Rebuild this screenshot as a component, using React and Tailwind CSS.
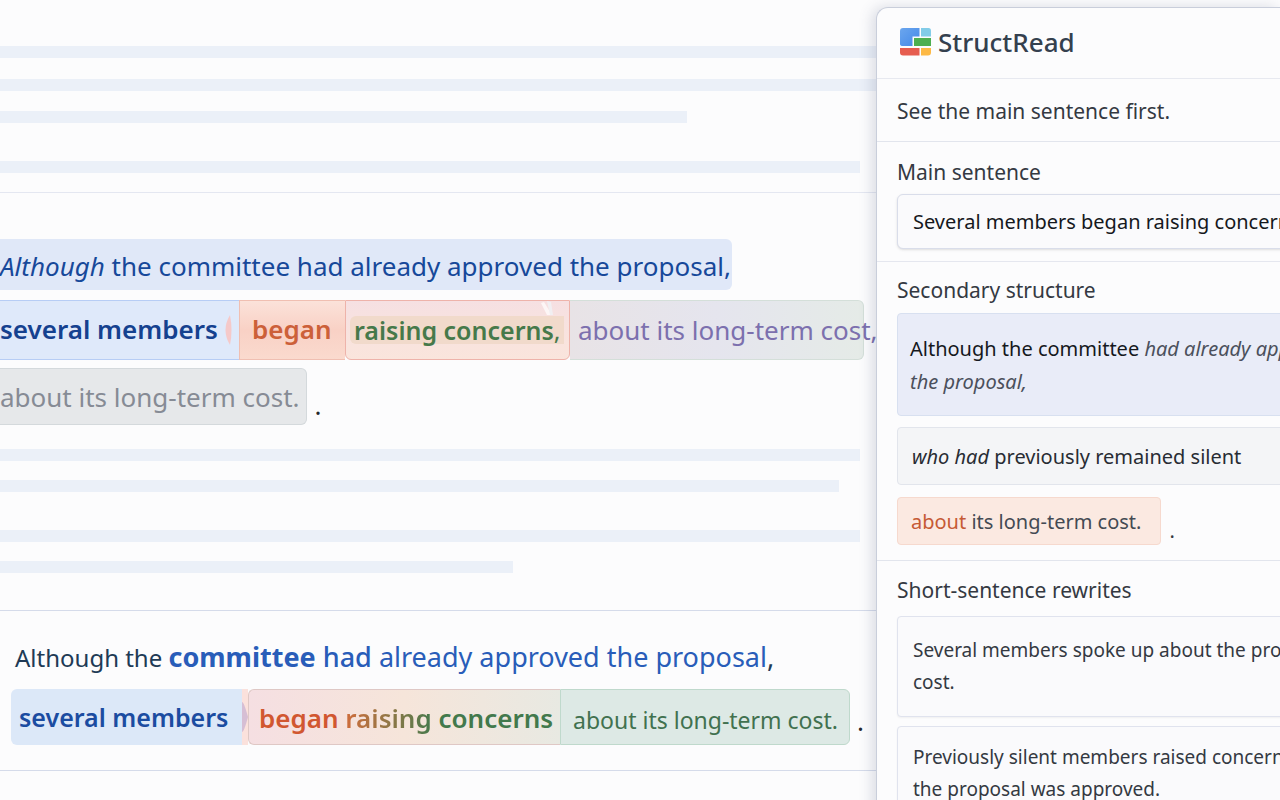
import React from "react";

function TextBar({ className }) {
  return <div className={"h-3 bg-[#ebf0f8] " + className} />;
}

function Logo() {
  return (
    <svg width="32" height="28" viewBox="0 0 32 28" aria-hidden="true">
      <defs>
        <linearGradient id="logo-blue" x1="0" y1="0" x2="1" y2="1">
          <stop offset="0" stopColor="#6ba6ee" />
          <stop offset="1" stopColor="#4489e8" />
        </linearGradient>
      </defs>
      <path d="M3 0H19.5V8.5H12.5V18H3Q0 18 0 16V3Q0 0 3 0Z" fill="url(#logo-blue)" />
      <path d="M21 0H28.500Q31 0 31 3V8.500H21Z" fill="#82cce8" />
      <path d="M14 10H31V18H14Z" fill="#4daf50" />
      <path d="M0 20H19.500V27.500H3Q0 27.500 0 24.500Z" fill="#e65d50" />
      <path d="M21 20H31V24.500Q31 27.500 28 27.500H21Z" fill="#fdb945" />
    </svg>
  );
}

function Document() {
  return (
    <main className="min-w-0 flex-1 overflow-hidden whitespace-nowrap">
      <section className="flex h-[193px] flex-col border-b border-[#e4e7f1] pt-[46px]">
        <TextBar className="w-full" />
        <TextBar className="mt-[21px] w-full" />
        <TextBar className="mt-5 mr-[189px]" />
        <TextBar className="mt-[38px] mr-4" />
      </section>

      <section className="flex flex-col items-start pt-[46px] pb-[37px] text-[26px]">
        <p className="h-[51px] rounded-r-md bg-[#e0e8f8] pr-px leading-[54px] text-[#17489a]">
          <em>Although</em> the committee had already approved the proposal,
        </p>
        <p className="mt-[10px] flex h-[60px] items-stretch leading-[56px]">
          <strong className="relative w-[239px] border-y border-[#b7cdf5] bg-[#dfe9fa] font-semibold text-[#15418f]">
            several members
            <svg className="absolute top-[14px] right-[6px]" width="8" height="30" viewBox="0 0 8 30" aria-hidden="true">
              <path d="M5 0Q8 15 5 30Q-4 15 5 0Z" fill="#f5c9c9" />
            </svg>
          </strong>
          <strong className="w-[106px] border border-r-0 border-[#f0bfb2] bg-linear-to-b from-[#fbe2da] via-[#f9d1c5] to-[#fadace] pl-3 font-semibold text-[#cc6039]">
            began
          </strong>
          <strong className="relative flex w-[225px] items-center rounded-b-md border border-[#eeb3aa] bg-linear-to-b from-[#f6e0e2] to-[#fae5dc] pl-1 text-[25px] font-semibold text-[#46794a]">
            <span className="rounded-l-md bg-[#f1dacb] px-1 leading-7">
              raising concerns<span className="font-normal">,</span>
            </span>
            <svg className="absolute top-0 right-[16px]" width="12" height="14" viewBox="0 0 12 14" aria-hidden="true">
              <path d="M0 2L3 1L11 14H6Z" fill="#fdf6f6" />
              <path d="M6 0L10 1L12 14H9Z" fill="#f1eff2" />
            </svg>
          </strong>
          <span className="w-[294px] rounded-r-md border border-l-0 border-[#d4dfd9] bg-linear-to-r from-[#e8e3e6] via-[#e5e5ee] to-[#e5ebe7] pl-2 leading-[58px] text-[#7c70ae]">
            about its long-term cost,
          </span>
        </p>
        <p className="mt-2 flex items-end gap-2">
          <span className="h-[57px] rounded-r-md border border-l-0 border-[#d4d9dc] bg-[#e6e8ea] pr-[6px] leading-[56px] text-[#868b95]">
            about its long-term cost.
          </span>
          <span className="text-[#25282d]">.</span>
        </p>
        <div className="mt-6 flex w-full flex-col">
          <TextBar className="mr-4" />
          <TextBar className="mt-[19px] mr-[37px]" />
          <TextBar className="mt-[38px] mr-4" />
          <TextBar className="mt-[19px] mr-[363px]" />
        </div>
      </section>

      <section className="flex flex-col items-start border-y border-[#d5dbea] px-[11px] pt-[23px] pb-[25px] text-[26px]">
        <p className="h-[55px] pl-1 text-[27px] leading-[45px] text-[#295db9]">
          <span className="text-2xl text-[#203a55]">Although the </span>
          <strong className="font-bold">committee</strong> <span className="font-medium">had</span> already approved the proposal<span className="text-[#203a55]">,</span>
        </p>
        <p className="flex h-14 items-stretch leading-[56px]">
          <strong className="w-[231px] rounded-l-md bg-[#dce8f8] pl-2 text-[25px] font-semibold text-[#1b4ca1]">
            several members
          </strong>
          <span className="flex w-[6px] items-center bg-[#fbe1dc]">
            <svg width="6" height="30" viewBox="0 0 6 30" aria-hidden="true">
              <path d="M0 0Q2 0 6 15Q2 30 0 30Z" fill="#d6bed4" />
            </svg>
          </span>
          <strong className="w-[312px] rounded-l-md border border-r-0 border-[#dfc8c5] bg-linear-to-r from-[#f5dfe2] via-[#f6e5da] to-[#e8e9e2] pl-[10px] font-semibold text-[#42794c]">
            <span className="text-[#d15730]">began</span>{" "}
            <span className="bg-linear-to-r from-[#cf6c3c] to-[#42794c] bg-clip-text text-transparent">raising</span> concerns
          </strong>
          <span className="w-[290px] rounded-r-md border border-[#bfd9cc] bg-[#dde9e5] pl-3 text-[23px] leading-[60px] text-[#41714f]">
            about its long-term cost.
          </span>
          <span className="pt-1 pl-[7px] text-[#25282d]">.</span>
        </p>
      </section>
    </main>
  );
}

function StructPanel() {
  return (
    <aside className="z-10 mt-[7px] h-[900px] w-[404px] shrink-0 rounded-tl-xl border-t border-l border-[#c9cedb] bg-[#fcfcfd] text-xl whitespace-nowrap text-[#343942] shadow-[-4px_0_14px_rgba(60,70,110,0.18)]">
      <header className="flex h-[71px] items-center gap-[6px] border-b border-[#e7e9f0] pb-[2px] pl-[23px]">
        <Logo />
        <h1 className="text-[26px] font-medium text-[#34404e]">StructRead</h1>
      </header>
      <p className="h-[63px] border-b border-[#e2e5ed] pl-5 text-[21px] leading-[64px]">See the main sentence first.</p>

      <section className="h-[120px] border-b border-[#e5e7ef] pt-[13px] pl-5">
        <h2 className="text-[21px] leading-[34px]">Main sentence</h2>
        <div className="mt-[5px] w-[480px] rounded-md border border-[#d9ddea] bg-[#fafafc] pl-[15px] leading-[53px] text-[#15181d] shadow-sm">
          Several members began raising concerns.
        </div>
      </section>

      <section className="h-[299px] border-b border-[#e2e5ed] pt-[11px] pl-5">
        <h2 className="text-[21px] leading-[34px]">Secondary structure</h2>
        <div className="mt-[6px] h-[103px] w-[480px] rounded border border-[#d8e0f0] bg-[#e9ecf8] pt-[18px] pl-3 leading-[33px] text-[#4b505c]">
          <span className="text-[#15181d]">Although the committee</span> <em>had already approved</em>
          <br />
          <em>the proposal,</em>
        </div>
        <div className="mt-[11px] h-[58px] w-[480px] rounded border border-[#e2e5ec] bg-[#f4f5f7] pl-[14px] leading-[58px] text-[#282c33]">
          <em>who had</em> previously remained silent
        </div>
        <div className="mt-3 flex items-end gap-2">
          <span className="h-12 rounded border border-[#f6d9ce] bg-[#fbe9e1] pr-[19px] pl-[13px] leading-[48px] text-[#444a53]">
            <span className="text-[#c65a35]">about</span> its long-term cost.
          </span>
          <span>.</span>
        </div>
      </section>

      <section className="flex flex-col pt-3 pl-5 text-[19px]">
        <h2 className="text-[21px] leading-[34px]">Short-sentence rewrites</h2>
        <p className="mt-[9px] h-[101px] w-[480px] rounded border border-[#e0e3ee] bg-[#fafafc] pt-[17px] pl-[15px] leading-8 shadow-xs">
          Several members spoke up about the proposal’s
          <br />
          cost.
        </p>
        <p className="mt-[9px] h-[101px] w-[480px] rounded border border-[#e0e3ee] bg-[#fafafc] pt-[14px] pl-[15px] leading-8 shadow-xs">
          Previously silent members raised concerns after
          <br />
          the proposal was approved.
        </p>
      </section>
    </aside>
  );
}

export default function App() {
  return (
    <div className="flex h-screen items-start overflow-hidden bg-[#fcfcfd] font-['Noto_Sans',sans-serif]">
      <Document />
      <StructPanel />
    </div>
  );
}
